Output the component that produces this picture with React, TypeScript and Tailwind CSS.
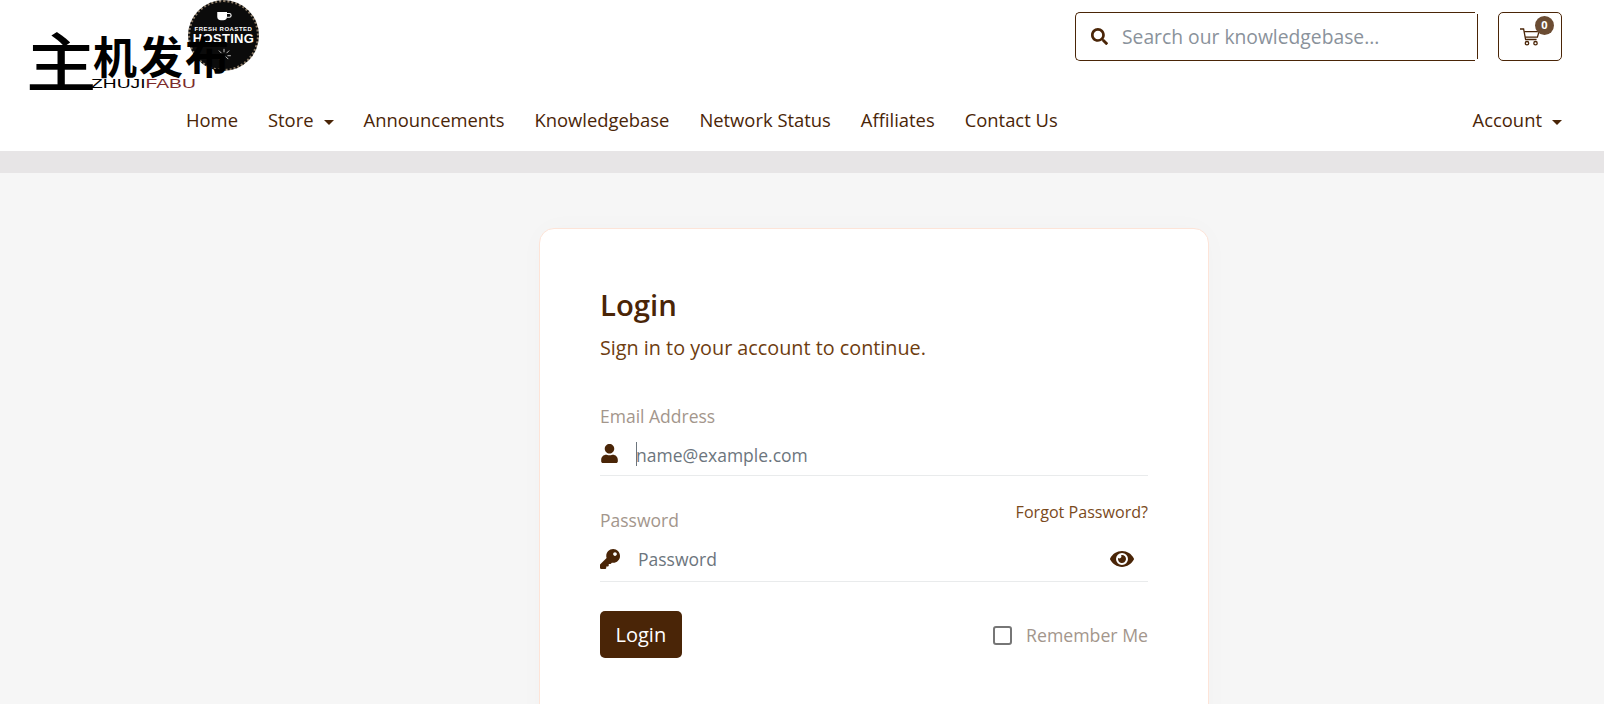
import { FaEye, FaKey, FaSearch, FaUser } from "react-icons/fa";

const navLinks = ["Home", "Store", "Announcements", "Knowledgebase", "Network Status", "Affiliates", "Contact Us"];

function Caret() {
  return <span className="ml-[10px] inline-block border-x-[5px] border-t-[5px] border-x-transparent border-t-[#4a2507] align-middle" />;
}

function CartIcon() {
  return (
    <svg viewBox="0 0 20 18" className="h-[18px] w-[20px]" fill="none" stroke="#4a2507" strokeWidth="1.3">
      <path d="M0 1h3.6l2 10.5h11" />
      <path d="M4.2 3.6H19l-1.6 5.6H5.2" />
      <circle cx="7" cy="15.2" r="1.7" />
      <circle cx="15.5" cy="15.2" r="1.7" />
    </svg>
  );
}

// Logo is an image in the original, so the pieces overlap on purpose
function Logo() {
  return (
    <div className="relative h-[92px] w-[232px] shrink-0 overflow-visible">
      <div className="absolute left-[158px] top-0 flex h-[71px] w-[71px] flex-col items-center rounded-full border-2 border-dotted border-[#8a7a66] bg-[#0b0b0b] text-white">
        <svg viewBox="0 0 24 14" className="mt-[9px] h-[11px] w-[18px]">
          <path d="M3 1h13v6a5 5 0 0 1-5 5H8a5 5 0 0 1-5-5z" fill="#fff" />
          <path d="M16 3h3a2 2 0 0 1 0 5h-3" fill="none" stroke="#fff" strokeWidth="1.5" />
        </svg>
        <span className="mt-[4px] font-['Liberation_Sans',sans-serif] text-[6px] leading-[7px] font-bold tracking-[0.5px] whitespace-nowrap">FRESH ROASTED</span>
        <span className="font-['Liberation_Sans',sans-serif] text-[13px] leading-[12px] font-bold tracking-[0.3px]">HOSTING</span>
        <svg viewBox="0 0 20 14" className="mt-[3px] h-[12px] w-[18px]" stroke="#ddd" strokeWidth="1">
          <path d="M10 1v4M4 3l3 3M16 3l-3 3M2 9h4M14 9h4M5 13l3-3M15 13l-3-3" />
        </svg>
      </div>
      <span className="absolute left-[-4px] top-[22px] origin-left scale-x-110 font-['Noto_Sans_CJK_SC',sans-serif] text-[64px] leading-[72px] font-medium text-black">主</span>
      <span className="absolute left-[63px] top-[31px] font-['Noto_Sans_CJK_SC',sans-serif] text-[44px] leading-[48px] font-bold tracking-[2px] whitespace-nowrap text-black">机发布</span>
      <span className="absolute left-[61px] top-[77px] origin-left scale-x-[1.48] font-['Liberation_Sans',sans-serif] text-[13px] leading-[14px] whitespace-nowrap text-black">
        ZHUJI<span className="text-[#7c2b2b]">FABU</span>
      </span>
    </div>
  );
}

export default function App() {
  return (
    <div className="flex h-screen flex-col overflow-hidden bg-[#f6f6f6] font-['Open_Sans',sans-serif] text-[#4a2507]">
      <header className="h-[151px] shrink-0 bg-white pl-[30px] pr-[42px]">
        <div className="flex h-[92px] items-start justify-between">
          <Logo />
          <div className="flex items-center gap-[20px] pt-[12px]">
            <div className="flex h-[49px] w-[403px] items-center">
              <div className="flex h-full w-[400px] items-center rounded-l-[5px] border-y border-l border-[#4a2507] pl-[15px]">
                <FaSearch className="h-[17px] w-[17px] text-[#4a2507]" />
                <input
                  placeholder="Search our knowledgebase..."
                  className="ml-[14px] min-w-0 flex-1 bg-transparent text-[19.3px] leading-[30px] outline-none placeholder:text-[#8a929b]"
                />
              </div>
              <span className="ml-[2px] h-[45px] w-px bg-[#4a2507]" />
            </div>
            <div className="relative flex h-[49px] w-[64px] items-center justify-center rounded-[5px] border border-[#4a2507]">
              <CartIcon />
              <span className="absolute right-[7px] top-[3px] flex h-[19px] w-[19px] items-center justify-center rounded-full bg-[#6b4c33] text-[11px] font-bold text-white">0</span>
            </div>
          </div>
        </div>
        <nav className="flex items-center justify-between pl-[156px] pt-[14px] text-[18.4px] leading-[27px]">
          <ul className="flex gap-[30px]">
            {navLinks.map((link) => (
              <li key={link} className="whitespace-nowrap">
                {link}
                {link === "Store" && <Caret />}
              </li>
            ))}
          </ul>
          <div className="whitespace-nowrap">
            Account
            <Caret />
          </div>
        </nav>
      </header>
      <div className="h-[22px] shrink-0 bg-[#e7e5e6]" />
      <main className="flex flex-1 justify-start pl-[539px] pt-[55px]">
        <section className="h-[560px] w-[670px] rounded-[15px] border border-[#fde4d8] bg-white px-[60px] pt-[58px] shadow-[0_0_30px_rgba(0,0,0,0.02)]">
          <h1 className="text-[29.3px] leading-[36px] font-semibold text-[#4a2507]">Login</h1>
          <p className="mt-[10px] text-[19.8px] leading-[30px] text-[#6e3d10]">Sign in to your account to continue.</p>

          <label className="mt-[40px] block text-[17.5px] leading-[26px] text-[#a3968c]">Email Address</label>
          <div className="relative mt-[9px] flex h-[38px] items-center border-b border-[#e9ebec] pb-[2px]">
            <FaUser className="mb-[5px] h-[19px] w-[19px] shrink-0 text-[#4a2507]" />
            <input
              placeholder="name@example.com"
              className="ml-[17px] min-w-0 flex-1 bg-transparent text-[17.5px] outline-none placeholder:text-[#6c757d]"
            />
            <span className="absolute left-[36px] top-[4px] h-[24px] w-px bg-[#6c757d]" />
          </div>

          <div className="mt-[25px] flex items-start justify-between">
            <label className="mt-[6px] block text-[17.5px] leading-[26px] text-[#a3968c]">Password</label>
            <a className="text-[16.1px] leading-[22px] text-[#7a4a1c]">Forgot Password?</a>
          </div>
          <div className="mt-[6px] flex h-[43px] items-center border-b border-[#e9ebec] pb-[2px]">
            <FaKey className="h-[20px] w-[20px] shrink-0 text-[#4a2507]" />
            <input
              placeholder="Password"
              className="ml-[18px] min-w-0 flex-1 bg-transparent text-[17.5px] outline-none placeholder:text-[#6c757d]"
            />
            <FaEye className="mr-[14px] h-[22px] w-[24px] text-[#4a2507]" />
          </div>

          <div className="mt-[29px] flex items-center justify-between">
            <button className="h-[47px] rounded-[5px] bg-[#4a2507] px-[15.5px] text-[20px] text-white">Login</button>
            <label className="mt-[2px] flex items-center gap-[14px] text-[17.7px] text-[#a3968c]">
              <span className="h-[19px] w-[19px] rounded-[3px] border-2 border-[#767676]" />
              Remember Me
            </label>
          </div>
        </section>
      </main>
    </div>
  );
}
